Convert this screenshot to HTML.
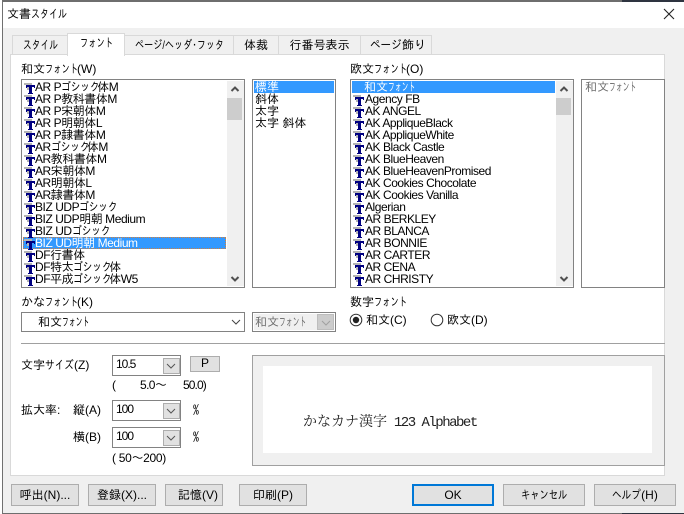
<!DOCTYPE html>
<html lang="ja"><head><meta charset="utf-8"><title>文書スタイル</title>
<style>
html,body{margin:0;padding:0;background:#f0f0f0}
#w{position:relative;width:684px;height:514px;overflow:hidden;background:#f0f0f0;font:12px/12px "Liberation Sans","IPAGothic","Noto Sans CJK JP",sans-serif;color:#000}
#w div{position:absolute;box-sizing:border-box}
.l{white-space:nowrap;line-height:14px;height:14px}
.n{letter-spacing:-.6px}
i{font-style:normal;display:inline-block;transform-origin:0 50%;text-align:left;white-space:nowrap}
.f{width:32px;transform:scaleX(.69)}
.fs{width:27px;transform:scaleX(.57)}
.go{width:36px;transform:scaleX(.83)}
.st{width:35px;transform:scaleX(.73)}
.ti{width:35px;transform:scaleX(.75)}
.sz{width:29px;transform:scaleX(.8)}
.pg{width:32px;transform:scaleX(.88)}
.ph{width:89px;transform:scaleX(.76)}
.ca{width:46px;transform:scaleX(.77)}
.he{width:29px;transform:scaleX(.8)}
.tab{background:#f0f0f0;border:1px solid #d9d9d9;border-bottom:0;text-align:center;line-height:18px;white-space:nowrap}
.box{background:#fff;border:1px solid #828282}
.btn{background:#e1e1e1;border:1px solid #adadad;text-align:center;line-height:20px;white-space:nowrap}
.sb{background:#f0f0f0}
.th{background:#cdcdcd}
.r{height:12px;line-height:12px;white-space:nowrap;left:0;right:0;padding-left:12px;letter-spacing:-.45px}
.e .r{padding-left:13px}
.r::before{content:"";position:absolute;left:1px;top:1px;width:12px;height:14px;background:
linear-gradient(#000080,#000080) 2px 3px/9px 2px no-repeat,
linear-gradient(#000080,#000080) 2px 3px/1px 3px no-repeat,
linear-gradient(#000080,#000080) 10px 3px/1px 3px no-repeat,
linear-gradient(#000080,#000080) 5px 3px/3px 9px no-repeat,
linear-gradient(#000080,#000080) 4px 11px/5px 1px no-repeat,
linear-gradient(#b4b4b4,#b4b4b4) 0 1px/8px 2px no-repeat,
linear-gradient(#b4b4b4,#b4b4b4) 3px 1px/2px 7px no-repeat}
.s{height:12px;line-height:12px;white-space:nowrap;left:0;right:0}
.sel{background:#3399ff;color:#fff}
.dd{background:#e1e1e1;border:1px solid #adadad}
.m{font-family:"IPAGothic","Liberation Sans",sans-serif}
</style></head><body>
<div id="w">
<!-- window frame -->
<div style="left:0;top:0;width:684px;height:28px;background:#fff"></div>
<div style="left:0;top:0;width:3px;height:514px;background:#fff"></div>
<div style="left:2px;top:0;width:1px;height:514px;background:#707070"></div>
<div style="left:2px;top:0;width:620px;height:2px;background:#6e6e6e"></div>
<div style="left:622px;top:0;width:62px;height:2px;background:#2e3440"></div>
<div style="left:2px;top:513px;width:620px;height:1px;background:#6e6e6e"></div>
<div style="left:622px;top:513px;width:62px;height:1px;background:#2e3440"></div>
<div class="l" style="left:7px;top:7px;font-size:12px">文書<i class="ti">スタイル</i></div>
<svg style="position:absolute;left:663px;top:8px" width="12" height="12" viewBox="0 0 12 12"><path d="M1 1L11 11M11 1L1 11" stroke="#222" stroke-width="1.1" fill="none"/></svg>

<!-- tabs -->
<div class="tab" style="left:12px;top:35px;width:56px;height:20px"><i class="st">スタイル</i></div>
<div class="tab" style="left:124px;top:35px;width:110px;height:20px"><i class="ph">ページ/ヘッダ･フッタ</i></div>
<div class="tab" style="left:233px;top:35px;width:46px;height:20px">体裁</div>
<div class="tab" style="left:278px;top:35px;width:83px;height:20px">行番号表示</div>
<div class="tab" style="left:360px;top:35px;width:72px;height:20px;padding-left:4px"><i class="pg">ページ</i>飾り</div>
<div style="left:10px;top:54px;width:655px;height:422px;background:#fff;border:1px solid #d9d9d9"></div>
<div class="tab" style="left:67px;top:33px;width:58px;height:23px;background:#fff;line-height:19px;z-index:2"><i class="f">フォント</i></div>

<!-- labels -->
<div class="l" style="left:21px;top:62px">和文<i class="f">フォント</i>(W)</div>
<div class="l" style="left:350px;top:62px">欧文<i class="f">フォント</i>(O)</div>

<!-- list 1 -->
<div class="box" style="left:21px;top:79px;width:224px;height:209px"></div>
<div style="left:23px;top:81px;width:204px;height:205px;overflow:hidden">
<div class="sel" style="left:0;top:156px;width:203px;height:12px;outline:1px dotted #d08040;outline-offset:-1px"></div>
<div class="r" style="top:0">AR P<i class="go">ゴシック</i>体M</div>
<div class="r" style="top:12px">AR P教科書体M</div>
<div class="r" style="top:24px">AR P宋朝体M</div>
<div class="r" style="top:36px">AR P明朝体L</div>
<div class="r" style="top:48px">AR P隷書体M</div>
<div class="r" style="top:60px">AR<i class="go">ゴシック</i>体M</div>
<div class="r" style="top:72px">AR教科書体M</div>
<div class="r" style="top:84px">AR宋朝体M</div>
<div class="r" style="top:96px">AR明朝体L</div>
<div class="r" style="top:108px">AR隷書体M</div>
<div class="r" style="top:120px">BIZ UDP<i class="go">ゴシック</i></div>
<div class="r" style="top:132px">BIZ UDP明朝 Medium</div>
<div class="r" style="top:144px">BIZ UD<i class="go">ゴシック</i></div>
<div class="r" style="top:156px;color:#fff">BIZ UD明朝 Medium</div>
<div class="r" style="top:168px">DF行書体</div>
<div class="r" style="top:180px">DF特太<i class="go">ゴシック</i>体</div>
<div class="r" style="top:192px">DF平成<i class="go">ゴシック</i>体W5</div>
</div>
<div class="sb" style="left:227px;top:81px;width:17px;height:205px"></div>
<div class="th" style="left:227px;top:98px;width:15px;height:22px"></div>
<svg style="position:absolute;left:230px;top:85px" width="10" height="8" viewBox="0 0 10 8"><path d="M1.5 6L5 2.5L8.5 6" stroke="#505050" stroke-width="2" fill="none"/></svg>
<svg style="position:absolute;left:230px;top:275px" width="10" height="8" viewBox="0 0 10 8"><path d="M1.5 2L5 5.5L8.5 2" stroke="#505050" stroke-width="2" fill="none"/></svg>

<!-- list 2 -->
<div class="box" style="left:252px;top:79px;width:84px;height:209px"></div>
<div class="sel" style="left:254px;top:81px;width:80px;height:12px"></div>
<div class="s" style="left:255px;right:auto;top:81px;color:#fff">標準</div>
<div class="s" style="left:255px;right:auto;top:93px">斜体</div>
<div class="s" style="left:255px;right:auto;top:105px">太字</div>
<div class="s" style="left:255px;right:auto;top:117px">太字 斜体</div>

<!-- list 3 -->
<div class="box" style="left:350px;top:79px;width:224px;height:209px"></div>
<div class="e" style="left:352px;top:81px;width:204px;height:205px;overflow:hidden">
<div class="sel" style="left:0;top:0;width:203px;height:12px"></div>
<div class="s" style="left:12px;top:0;color:#fff">和文<i class="fs">フォント</i></div>
<div class="r" style="top:12px">Agency FB</div>
<div class="r" style="top:24px">AK ANGEL</div>
<div class="r" style="top:36px">AK AppliqueBlack</div>
<div class="r" style="top:48px">AK AppliqueWhite</div>
<div class="r" style="top:60px">AK Black Castle</div>
<div class="r" style="top:72px">AK BlueHeaven</div>
<div class="r" style="top:84px">AK BlueHeavenPromised</div>
<div class="r" style="top:96px">AK Cookies Chocolate</div>
<div class="r" style="top:108px">AK Cookies Vanilla</div>
<div class="r" style="top:120px">Algerian</div>
<div class="r" style="top:132px">AR BERKLEY</div>
<div class="r" style="top:144px">AR BLANCA</div>
<div class="r" style="top:156px">AR BONNIE</div>
<div class="r" style="top:168px">AR CARTER</div>
<div class="r" style="top:180px">AR CENA</div>
<div class="r" style="top:192px">AR CHRISTY</div>
</div>
<div class="sb" style="left:556px;top:81px;width:17px;height:205px"></div>
<div class="th" style="left:556px;top:98px;width:15px;height:17px"></div>
<svg style="position:absolute;left:559px;top:85px" width="10" height="8" viewBox="0 0 10 8"><path d="M1.5 6L5 2.5L8.5 6" stroke="#505050" stroke-width="2" fill="none"/></svg>
<svg style="position:absolute;left:559px;top:275px" width="10" height="8" viewBox="0 0 10 8"><path d="M1.5 2L5 5.5L8.5 2" stroke="#505050" stroke-width="2" fill="none"/></svg>

<!-- list 4 -->
<div class="box" style="left:581px;top:79px;width:84px;height:209px"></div>
<div class="s" style="left:585px;right:auto;top:81px;color:#6d6d6d">和文<i class="fs">フォント</i></div>

<!-- kana font -->
<div class="l" style="left:21px;top:295px">かな<i class="f">フォント</i>(K)</div>
<div class="box" style="left:21px;top:312px;width:224px;height:20px"></div>
<div class="l" style="left:38px;top:315px">和文<i class="fs">フォント</i></div>
<svg style="position:absolute;left:231px;top:318px" width="10" height="8" viewBox="0 0 10 8"><path d="M1 2L5 6L9 2" stroke="#444" stroke-width="1" fill="none"/></svg>
<div class="box" style="left:252px;top:312px;width:84px;height:20px"></div>
<div style="left:254px;top:314px;width:63px;height:16px;background:#f0f0f0"></div>
<div class="l" style="left:255px;top:315px;color:#6d6d6d">和文<i class="fs">フォント</i></div>
<div style="left:317px;top:314px;width:17px;height:16px;background:#ccc;border:1px solid #bdbdbd"></div>
<svg style="position:absolute;left:321px;top:319px" width="10" height="8" viewBox="0 0 10 8"><path d="M1 2L5 6L9 2" stroke="#a0a0a0" stroke-width="1" fill="none"/></svg>

<!-- numeric font -->
<div class="l" style="left:350px;top:295px">数字<i class="f">フォント</i></div>
<svg style="position:absolute;left:349px;top:313px" width="14" height="14" viewBox="0 0 14 14"><circle cx="7" cy="7" r="5.8" fill="#fff" stroke="#333" stroke-width="1"/><circle cx="7" cy="7" r="3.2" fill="#222"/></svg>
<div class="l" style="left:366px;top:313px">和文(C)</div>
<svg style="position:absolute;left:430px;top:313px" width="14" height="14" viewBox="0 0 14 14"><circle cx="7" cy="7" r="5.8" fill="#fff" stroke="#333" stroke-width="1"/></svg>
<div class="l" style="left:447px;top:313px">欧文(D)</div>

<div style="left:21px;top:343px;width:644px;height:1px;background:#a0a0a0"></div>

<!-- size -->
<div class="l" style="left:21px;top:358px">文字<i class="sz">サイズ</i>(Z)</div>
<div class="box" style="left:112px;top:355px;width:69px;height:21px"></div>
<div class="l n" style="left:116px;top:357px;letter-spacing:-1px">10.5</div>
<div class="dd" style="left:163px;top:358px;width:17px;height:16px"></div>
<svg style="position:absolute;left:166px;top:362px" width="10" height="8" viewBox="0 0 10 8"><path d="M1 2L5 6L9 2" stroke="#555" stroke-width="1" fill="none"/></svg>
<div class="btn" style="left:190px;top:356px;width:30px;height:16px;line-height:13px">P</div>
<div class="l" style="left:112px;top:378px">(</div>
<div class="l n" style="left:140px;top:378px">5.0〜</div>
<div class="l n" style="left:183px;top:378px;letter-spacing:-.9px">50.0)</div>

<div class="l" style="left:21px;top:403px">拡大率:</div>
<div class="l" style="left:73px;top:403px">縦(A)</div>
<div class="box" style="left:112px;top:400px;width:69px;height:21px"></div>
<div class="l n" style="left:116px;top:402px;letter-spacing:-1px">100</div>
<div class="dd" style="left:163px;top:403px;width:17px;height:16px"></div>
<svg style="position:absolute;left:166px;top:407px" width="10" height="8" viewBox="0 0 10 8"><path d="M1 2L5 6L9 2" stroke="#555" stroke-width="1" fill="none"/></svg>
<div class="l m" style="left:193px;top:403px">%</div>

<div class="l" style="left:73px;top:430px">横(B)</div>
<div class="box" style="left:112px;top:427px;width:69px;height:21px"></div>
<div class="l n" style="left:116px;top:429px;letter-spacing:-1px">100</div>
<div class="dd" style="left:163px;top:430px;width:17px;height:16px"></div>
<svg style="position:absolute;left:166px;top:434px" width="10" height="8" viewBox="0 0 10 8"><path d="M1 2L5 6L9 2" stroke="#555" stroke-width="1" fill="none"/></svg>
<div class="l m" style="left:193px;top:430px">%</div>
<div class="l" style="left:112px;top:451px;letter-spacing:-.3px">( 50〜200)</div>

<!-- preview -->
<div style="left:252px;top:355px;width:413px;height:111px;background:#f0f0f0;border:1px solid #a0a0a0"></div>
<div style="left:263px;top:366px;width:389px;height:87px;background:#fff"></div>
<div style="left:303px;top:415px;white-space:nowrap;line-height:16px;font-family:'Liberation Serif','Noto Serif CJK SC',serif;font-size:14px;color:#222">かなカナ漢字<span style="font-family:'Liberation Mono',monospace;font-size:14px;letter-spacing:-1.5px;white-space:pre"> 123 Alphabet</span></div>

<!-- buttons -->
<div class="btn" style="left:11px;top:484px;width:68px;height:22px">呼出(N)...</div>
<div class="btn" style="left:88px;top:484px;width:68px;height:22px">登録(X)...</div>
<div class="btn" style="left:165px;top:484px;width:58px;height:22px;padding-left:8px">記憶(V)</div>
<div class="btn" style="left:239px;top:484px;width:68px;height:22px">印刷(P)</div>
<div class="btn" style="left:412px;top:484px;width:82px;height:22px;border:2px solid #0078d7;line-height:18px">OK</div>
<div class="btn" style="left:503px;top:484px;width:82px;height:22px"><i class="ca">キャンセル</i></div>
<div class="btn" style="left:594px;top:484px;width:82px;height:22px"><i class="he">ヘルプ</i>(H)</div>
</div>
</body></html>
